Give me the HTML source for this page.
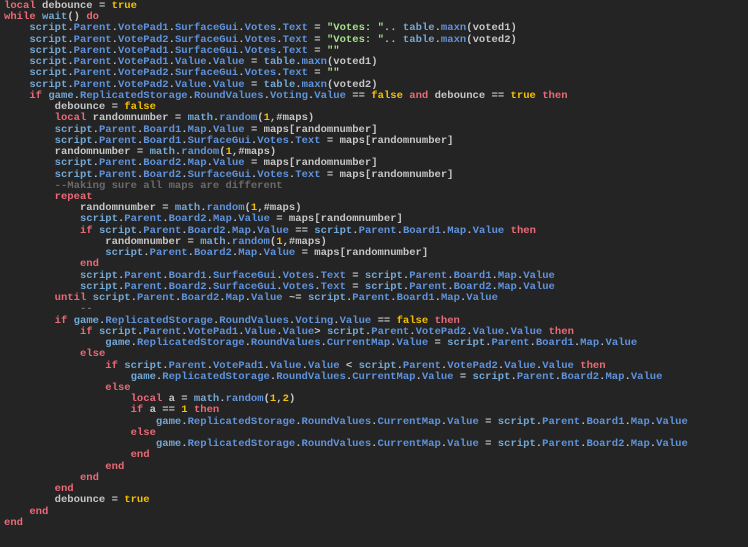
<!DOCTYPE html>
<html><head><meta charset="utf-8"><style>
html,body{margin:0;padding:0;background:#242424;width:748px;height:547px;overflow:hidden}
pre{position:absolute;left:4px;top:1px;margin:0;font-family:"Liberation Mono",monospace;font-size:10.55px;line-height:11.24px;color:#c6c6c6;font-weight:bold}
.k{color:#ea6a76}.b{color:#f5c000}.i{color:#5f93dc}.g{color:#74a8d4}.s{color:#a6e08a}.c{color:#6a6a6a}.n{color:#f5c000}
</style></head><body><pre><span class="k">local</span> debounce = <span class="b">true</span>
<span class="k">while</span> <span class="g">wait</span>() <span class="k">do</span>
    <span class="g">script</span>.<span class="i">Parent</span>.<span class="i">VotePad1</span>.<span class="i">SurfaceGui</span>.<span class="i">Votes</span>.<span class="i">Text</span> = <span class="s">"Votes: "</span>.. <span class="g">table</span>.<span class="i">maxn</span>(voted1)
    <span class="g">script</span>.<span class="i">Parent</span>.<span class="i">VotePad2</span>.<span class="i">SurfaceGui</span>.<span class="i">Votes</span>.<span class="i">Text</span> = <span class="s">"Votes: "</span>.. <span class="g">table</span>.<span class="i">maxn</span>(voted2)
    <span class="g">script</span>.<span class="i">Parent</span>.<span class="i">VotePad1</span>.<span class="i">SurfaceGui</span>.<span class="i">Votes</span>.<span class="i">Text</span> = <span class="s">""</span>
    <span class="g">script</span>.<span class="i">Parent</span>.<span class="i">VotePad1</span>.<span class="i">Value</span>.<span class="i">Value</span> = <span class="g">table</span>.<span class="i">maxn</span>(voted1)
    <span class="g">script</span>.<span class="i">Parent</span>.<span class="i">VotePad2</span>.<span class="i">SurfaceGui</span>.<span class="i">Votes</span>.<span class="i">Text</span> = <span class="s">""</span>
    <span class="g">script</span>.<span class="i">Parent</span>.<span class="i">VotePad2</span>.<span class="i">Value</span>.<span class="i">Value</span> = <span class="g">table</span>.<span class="i">maxn</span>(voted2)
    <span class="k">if</span> <span class="g">game</span>.<span class="i">ReplicatedStorage</span>.<span class="i">RoundValues</span>.<span class="i">Voting</span>.<span class="i">Value</span> == <span class="b">false</span> <span class="k">and</span> debounce == <span class="b">true</span> <span class="k">then</span>
        debounce = <span class="b">false</span>
        <span class="k">local</span> randomnumber = <span class="g">math</span>.<span class="i">random</span>(<span class="n">1</span>,#maps)
        <span class="g">script</span>.<span class="i">Parent</span>.<span class="i">Board1</span>.<span class="i">Map</span>.<span class="i">Value</span> = maps[randomnumber]
        <span class="g">script</span>.<span class="i">Parent</span>.<span class="i">Board1</span>.<span class="i">SurfaceGui</span>.<span class="i">Votes</span>.<span class="i">Text</span> = maps[randomnumber]
        randomnumber = <span class="g">math</span>.<span class="i">random</span>(<span class="n">1</span>,#maps)
        <span class="g">script</span>.<span class="i">Parent</span>.<span class="i">Board2</span>.<span class="i">Map</span>.<span class="i">Value</span> = maps[randomnumber]
        <span class="g">script</span>.<span class="i">Parent</span>.<span class="i">Board2</span>.<span class="i">SurfaceGui</span>.<span class="i">Votes</span>.<span class="i">Text</span> = maps[randomnumber]
        <span class="c">--Making sure all maps are different</span>
        <span class="k">repeat</span>
            randomnumber = <span class="g">math</span>.<span class="i">random</span>(<span class="n">1</span>,#maps)
            <span class="g">script</span>.<span class="i">Parent</span>.<span class="i">Board2</span>.<span class="i">Map</span>.<span class="i">Value</span> = maps[randomnumber]
            <span class="k">if</span> <span class="g">script</span>.<span class="i">Parent</span>.<span class="i">Board2</span>.<span class="i">Map</span>.<span class="i">Value</span> == <span class="g">script</span>.<span class="i">Parent</span>.<span class="i">Board1</span>.<span class="i">Map</span>.<span class="i">Value</span> <span class="k">then</span>
                randomnumber = <span class="g">math</span>.<span class="i">random</span>(<span class="n">1</span>,#maps)
                <span class="g">script</span>.<span class="i">Parent</span>.<span class="i">Board2</span>.<span class="i">Map</span>.<span class="i">Value</span> = maps[randomnumber]
            <span class="k">end</span>
            <span class="g">script</span>.<span class="i">Parent</span>.<span class="i">Board1</span>.<span class="i">SurfaceGui</span>.<span class="i">Votes</span>.<span class="i">Text</span> = <span class="g">script</span>.<span class="i">Parent</span>.<span class="i">Board1</span>.<span class="i">Map</span>.<span class="i">Value</span>
            <span class="g">script</span>.<span class="i">Parent</span>.<span class="i">Board2</span>.<span class="i">SurfaceGui</span>.<span class="i">Votes</span>.<span class="i">Text</span> = <span class="g">script</span>.<span class="i">Parent</span>.<span class="i">Board2</span>.<span class="i">Map</span>.<span class="i">Value</span>
        <span class="k">until</span> <span class="g">script</span>.<span class="i">Parent</span>.<span class="i">Board2</span>.<span class="i">Map</span>.<span class="i">Value</span> ~= <span class="g">script</span>.<span class="i">Parent</span>.<span class="i">Board1</span>.<span class="i">Map</span>.<span class="i">Value</span>
            <span class="c">--</span>
        <span class="k">if</span> <span class="g">game</span>.<span class="i">ReplicatedStorage</span>.<span class="i">RoundValues</span>.<span class="i">Voting</span>.<span class="i">Value</span> == <span class="b">false</span> <span class="k">then</span>
            <span class="k">if</span> <span class="g">script</span>.<span class="i">Parent</span>.<span class="i">VotePad1</span>.<span class="i">Value</span>.<span class="i">Value</span>&gt; <span class="g">script</span>.<span class="i">Parent</span>.<span class="i">VotePad2</span>.<span class="i">Value</span>.<span class="i">Value</span> <span class="k">then</span>
                <span class="g">game</span>.<span class="i">ReplicatedStorage</span>.<span class="i">RoundValues</span>.<span class="i">CurrentMap</span>.<span class="i">Value</span> = <span class="g">script</span>.<span class="i">Parent</span>.<span class="i">Board1</span>.<span class="i">Map</span>.<span class="i">Value</span>
            <span class="k">else</span>
                <span class="k">if</span> <span class="g">script</span>.<span class="i">Parent</span>.<span class="i">VotePad1</span>.<span class="i">Value</span>.<span class="i">Value</span> &lt; <span class="g">script</span>.<span class="i">Parent</span>.<span class="i">VotePad2</span>.<span class="i">Value</span>.<span class="i">Value</span> <span class="k">then</span>
                    <span class="g">game</span>.<span class="i">ReplicatedStorage</span>.<span class="i">RoundValues</span>.<span class="i">CurrentMap</span>.<span class="i">Value</span> = <span class="g">script</span>.<span class="i">Parent</span>.<span class="i">Board2</span>.<span class="i">Map</span>.<span class="i">Value</span>
                <span class="k">else</span>
                    <span class="k">local</span> a = <span class="g">math</span>.<span class="i">random</span>(<span class="n">1</span>,<span class="n">2</span>)
                    <span class="k">if</span> a == <span class="n">1</span> <span class="k">then</span>
                        <span class="g">game</span>.<span class="i">ReplicatedStorage</span>.<span class="i">RoundValues</span>.<span class="i">CurrentMap</span>.<span class="i">Value</span> = <span class="g">script</span>.<span class="i">Parent</span>.<span class="i">Board1</span>.<span class="i">Map</span>.<span class="i">Value</span>
                    <span class="k">else</span>
                        <span class="g">game</span>.<span class="i">ReplicatedStorage</span>.<span class="i">RoundValues</span>.<span class="i">CurrentMap</span>.<span class="i">Value</span> = <span class="g">script</span>.<span class="i">Parent</span>.<span class="i">Board2</span>.<span class="i">Map</span>.<span class="i">Value</span>
                    <span class="k">end</span>
                <span class="k">end</span>
            <span class="k">end</span>
        <span class="k">end</span>
        debounce = <span class="b">true</span>
    <span class="k">end</span>
<span class="k">end</span></pre></body></html>
